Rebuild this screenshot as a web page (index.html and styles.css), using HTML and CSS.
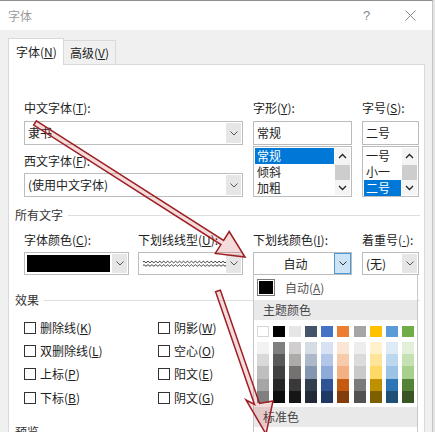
FILE: index.html
```html
<!DOCTYPE html>
<html lang="zh">
<head>
<meta charset="utf-8">
<title>字体</title>
<link rel="stylesheet" href="styles.css">
</head>
<body>
<div class="window">
  <div class="titlebar">
    <span class="title">字体</span>
    <span class="help">?</span>
    <span class="close"><svg width="11" height="11" viewBox="0 0 11 11"><path d="M0.5 0.5 L10.5 10.5 M10.5 0.5 L0.5 10.5" stroke="#8a8a8a" stroke-width="1" fill="none"/></svg></span>
  </div>
  <div class="client">
    <div class="tabs">
      <div class="tab active">字体(<u>N</u>)</div>
      <div class="tab">高级(<u>V</u>)</div>
    </div>
    <div class="panel">
      <div class="upper">
        <div class="col-wide">
          <div class="label">中文字体(<u>T</u>):</div>
          <div class="combo first">
            <span class="combo-text">隶书</span>
            <span class="btn"><svg width="8" height="5" viewBox="0 0 8 5"><path d="M0.5 0.5 L4 4 L7.5 0.5" stroke="#555" fill="none"/></svg></span>
          </div>
          <div class="label second">西文字体(<u>F</u>):</div>
          <div class="combo tight">
            <span class="combo-text">(使用中文字体)</span>
            <span class="btn"><svg width="8" height="5" viewBox="0 0 8 5"><path d="M0.5 0.5 L4 4 L7.5 0.5" stroke="#555" fill="none"/></svg></span>
          </div>
        </div>
        <div class="col-style">
          <div class="label">字形(<u>Y</u>):</div>
          <div class="field first">常规</div>
          <div class="listbox">
            <div class="items">
              <div class="item sel">常规</div>
              <div class="item">倾斜</div>
              <div class="item">加粗</div>
            </div>
            <div class="scroll">
              <svg width="9" height="6" viewBox="0 0 9 6"><path d="M1 5 L4.5 1.5 L8 5" stroke="#222" stroke-width="1.3" fill="none"/></svg>
              <span class="thumb"></span>
              <svg width="9" height="6" viewBox="0 0 9 6"><path d="M1 1 L4.5 4.5 L8 1" stroke="#222" stroke-width="1.3" fill="none"/></svg>
            </div>
          </div>
        </div>
        <div class="col-size">
          <div class="label">字号(<u>S</u>):</div>
          <div class="field first">二号</div>
          <div class="listbox">
            <div class="items">
              <div class="item">一号</div>
              <div class="item">小一</div>
              <div class="item sel">二号</div>
            </div>
            <div class="scroll">
              <svg width="9" height="6" viewBox="0 0 9 6"><path d="M1 5 L4.5 1.5 L8 5" stroke="#222" stroke-width="1.3" fill="none"/></svg>
              <span class="thumb"></span>
              <svg width="9" height="6" viewBox="0 0 9 6"><path d="M1 1 L4.5 4.5 L8 1" stroke="#222" stroke-width="1.3" fill="none"/></svg>
            </div>
          </div>
        </div>
      </div>

      <div class="group-head first-group"><span>所有文字</span><i></i></div>
      <div class="row2">
        <div class="cell c1">
          <div class="label">字体颜色(<u>C</u>):</div>
          <div class="combo">
            <span class="swatch-black"></span>
            <span class="btn"><svg width="8" height="5" viewBox="0 0 8 5"><path d="M0.5 0.5 L4 4 L7.5 0.5" stroke="#555" fill="none"/></svg></span>
          </div>
        </div>
        <div class="cell c2">
          <div class="label">下划线线型(<u>U</u>):</div>
          <div class="combo">
            <span class="wave"><svg width="84" height="8" viewBox="0 0 84 8"><path d="M0 2 q1 -1.6 2 0 t2 0 t2 0 t2 0 t2 0 t2 0 t2 0 t2 0 t2 0 t2 0 t2 0 t2 0 t2 0 t2 0 t2 0 t2 0 t2 0 t2 0 t2 0 t2 0 t2 0 t2 0 t2 0 t2 0 t2 0 t2 0 t2 0 t2 0 t2 0 t2 0 t2 0 t2 0 t2 0 t2 0 t2 0 t2 0 t2 0 t2 0 t2 0 t2 0 t2 0 t2 0 M0 5.5 q1 -1.6 2 0 t2 0 t2 0 t2 0 t2 0 t2 0 t2 0 t2 0 t2 0 t2 0 t2 0 t2 0 t2 0 t2 0 t2 0 t2 0 t2 0 t2 0 t2 0 t2 0 t2 0 t2 0 t2 0 t2 0 t2 0 t2 0 t2 0 t2 0 t2 0 t2 0 t2 0 t2 0 t2 0 t2 0 t2 0 t2 0 t2 0 t2 0 t2 0 t2 0 t2 0 t2 0 t2 0" stroke="#333" stroke-width="1" fill="none"/></svg></span>
            <span class="btn"><svg width="8" height="5" viewBox="0 0 8 5"><path d="M0.5 0.5 L4 4 L7.5 0.5" stroke="#555" fill="none"/></svg></span>
          </div>
        </div>
        <div class="cell c3">
          <div class="label">下划线颜色(<u>I</u>):</div>
          <div class="combo">
            <span class="combo-text center">自动</span>
            <span class="btn hot"><svg width="8" height="5" viewBox="0 0 8 5"><path d="M0.5 0.5 L4 4 L7.5 0.5" stroke="#333" fill="none"/></svg></span>
          </div>
          <div class="popup">
            <div class="auto-row"><span class="auto-box"></span><span class="auto-text">自动(<u>A</u>)</span></div>
            <div class="pop-head">主题颜色</div>
            <div class="theme-row">
              <span class="sw white" style="background:#ffffff"></span>
              <span class="sw" style="background:#000000"></span>
              <span class="sw" style="background:#e7e6e6"></span>
              <span class="sw" style="background:#44546a"></span>
              <span class="sw" style="background:#4472c4"></span>
              <span class="sw" style="background:#ed7d31"></span>
              <span class="sw" style="background:#a5a5a5"></span>
              <span class="sw" style="background:#ffc000"></span>
              <span class="sw" style="background:#5b9bd5"></span>
              <span class="sw" style="background:#70ad47"></span>
            </div>
            <div class="shades">
              <div class="shade-col"><i style="background:#f2f2f2"></i><i style="background:#d9d9d9"></i><i style="background:#bfbfbf"></i><i style="background:#a6a6a6"></i><i style="background:#808080"></i></div>
              <div class="shade-col"><i style="background:#7f7f7f"></i><i style="background:#595959"></i><i style="background:#404040"></i><i style="background:#262626"></i><i style="background:#0d0d0d"></i></div>
              <div class="shade-col"><i style="background:#d0cece"></i><i style="background:#aeaaaa"></i><i style="background:#757171"></i><i style="background:#3a3838"></i><i style="background:#171616"></i></div>
              <div class="shade-col"><i style="background:#d6dce4"></i><i style="background:#adb9ca"></i><i style="background:#8497b0"></i><i style="background:#333f4f"></i><i style="background:#222a35"></i></div>
              <div class="shade-col"><i style="background:#d9e2f3"></i><i style="background:#b4c6e7"></i><i style="background:#8eaadb"></i><i style="background:#2f5496"></i><i style="background:#1f3864"></i></div>
              <div class="shade-col"><i style="background:#fbe5d5"></i><i style="background:#f7caac"></i><i style="background:#f4b083"></i><i style="background:#c55a11"></i><i style="background:#833c0b"></i></div>
              <div class="shade-col"><i style="background:#ededed"></i><i style="background:#dbdbdb"></i><i style="background:#c9c9c9"></i><i style="background:#7b7b7b"></i><i style="background:#525252"></i></div>
              <div class="shade-col"><i style="background:#fff2cc"></i><i style="background:#ffe599"></i><i style="background:#ffd965"></i><i style="background:#bf9000"></i><i style="background:#7f6000"></i></div>
              <div class="shade-col"><i style="background:#deebf6"></i><i style="background:#bdd7ee"></i><i style="background:#9cc3e5"></i><i style="background:#2e75b5"></i><i style="background:#1f4e79"></i></div>
              <div class="shade-col"><i style="background:#e2efd9"></i><i style="background:#c5e0b3"></i><i style="background:#a8d08d"></i><i style="background:#538135"></i><i style="background:#375623"></i></div>
            </div>
            <div class="pop-head std">标准色</div>
          </div>
        </div>
        <div class="cell c4">
          <div class="label">着重号(<span class="dot">·</span>):</div>
          <div class="combo">
            <span class="combo-text">(无)</span>
            <span class="btn"><svg width="8" height="5" viewBox="0 0 8 5"><path d="M0.5 0.5 L4 4 L7.5 0.5" stroke="#555" fill="none"/></svg></span>
          </div>
        </div>
      </div>

      <div class="group-head effects-head"><span>效果</span><i></i></div>
      <div class="checks">
        <label class="check"><span class="box"></span>删除线(<u>K</u>)</label>
        <label class="check"><span class="box"></span>阴影(<u>W</u>)</label>
        <label class="check"><span class="box"></span>双删除线(<u>L</u>)</label>
        <label class="check"><span class="box"></span>空心(<u>O</u>)</label>
        <label class="check"><span class="box"></span>上标(<u>P</u>)</label>
        <label class="check"><span class="box"></span>阳文(<u>E</u>)</label>
        <label class="check"><span class="box"></span>下标(<u>B</u>)</label>
        <label class="check"><span class="box"></span>阴文(<u>G</u>)</label>
      </div>
      <div class="group-head preview-head"><span>预览</span><i></i></div>
    </div>
  </div>
</div>
<svg class="annot" width="435" height="432" viewBox="0 0 435 432">
  <polygon points="36.4,120.9 223.6,240.4 229.2,231.5 245,257 215.3,253.4 220.9,244.6 33.7,125.1" fill="rgba(200,60,60,0.18)" stroke="#9e1f24" stroke-width="1.5" stroke-linejoin="miter"/>
  <polygon points="220.4,290.2 259.5,403.5 273,401 266,434 246,400 254.5,404.5 215.6,291.8" fill="rgba(200,60,60,0.18)" stroke="#9e1f24" stroke-width="1.5" stroke-linejoin="miter"/>
</svg>
</body>
</html>
```

FILE: styles.css
```css
* { box-sizing: border-box; }
html, body { margin: 0; padding: 0; }
body {
  width: 435px;
  height: 432px;
  overflow: hidden;
  position: relative;
  background: #e4e4e4;
  font-family: "Noto Sans CJK SC", "Noto Sans", sans-serif;
  font-size: 12px;
  line-height: 16px;
  color: #222;
}
u { text-decoration: underline; text-underline-offset: 1px; }
.dot { font-family: "Liberation Sans", sans-serif; text-decoration: underline; text-underline-offset: 1px; }

.window {
  width: 433px;
  height: 432px;
  background: #f0f0f0;
  border-top: 1px solid #8f8f8f;
  border-right: 1px solid #c6c6c6;
  display: flex;
  flex-direction: column;
}
.titlebar {
  flex: none;
  height: 29px;
  background: #fff;
  display: flex;
  align-items: center;
  padding-left: 8px;
}
.title { flex: 1; color: #9b9b9b; }
.help { color: #8a8a8a; width: 14px; margin-right: 28px; font-family: "Liberation Sans", sans-serif; font-size: 13px; }
.close { width: 11px; height: 11px; margin-right: 16px; display: flex; }

.client {
  flex: 1;
  display: flex;
  flex-direction: column;
  padding: 8px 0 0 8px;
  min-height: 0;
}
.tabs { display: flex; align-items: flex-end; height: 26px; flex: none; }
.tab {
  height: 24px;
  width: 52px;
  padding-left: 6px;
  display: flex;
  align-items: center;
  background: #f0f0f0;
  border: 1px solid #d9d9d9;
  border-left: none;
  border-bottom: none;
}
.tab.active {
  width: 56px;
  height: 27px;
  padding-left: 7px;
  background: #fff;
  border-left: 1px solid #d9d9d9;
  margin-bottom: -1px;
  position: relative;
  z-index: 1;
}

.panel {
  flex: 1;
  width: 417px;
  background: #fff;
  border: 1px solid #d9d9d9;
  border-bottom: none;
  padding: 35px 0 0 6px;
  position: relative;
}
.label { height: 16px; white-space: nowrap; }

.upper { display: flex; margin-left: 9px; }
.col-wide { width: 219px; display: flex; flex-direction: column; }
.col-style { width: 99px; margin-left: 10px; display: flex; flex-direction: column; }
.col-size { width: 57px; margin-left: 10px; display: flex; flex-direction: column; }
.label.second { margin-top: 8px; }

.combo {
  height: 24px;
  border: 1px solid #bcbcbc;
  background: #fff;
  display: flex;
  align-items: stretch;
  padding: 1px;
}
.combo.first { margin-top: 5px; }
.combo.tight { margin-top: 4px; }
.combo-text { flex: 1; padding-left: 2px; display: flex; align-items: center; white-space: nowrap; }
.combo-text.center { justify-content: center; }
.btn {
  width: 15px;
  background: #e6e6e6;
  display: flex;
  align-items: center;
  justify-content: center;
}
.btn.hot { background: #cde4f7; border: 1px solid #4a9ad8; width: 17px; margin: -1px -1px -1px 0; }

.field {
  height: 24px;
  border: 1px solid #bcbcbc;
  padding-left: 3px;
  display: flex;
  align-items: center;
}
.field.first { margin-top: 5px; }
.listbox {
  margin-top: 1px;
  height: 51px;
  border: 1px solid #bcbcbc;
  display: flex;
  padding: 1px;
}
.items { flex: 1; display: flex; flex-direction: column; padding-right: 1px; }
.item { height: 16.3px; padding-left: 2px; display: flex; align-items: center; }
.item.sel { background: #0078d7; color: #fff; }
.scroll {
  width: 15px;
  display: flex;
  flex-direction: column;
  align-items: center;
  justify-content: space-between;
  padding: 5px 0 4px;
  background: #f4f4f4;
}
.thumb { width: 15px; height: 15px; background: #cdcdcd; }

.group-head { display: flex; align-items: center; height: 16px; color: #333; }
.group-head span { white-space: nowrap; }
.group-head i { flex: 1; height: 1px; background: #dedede; margin: 0 4px 0 5px; }
.first-group { margin-top: 10px; }

.row2 { display: flex; margin-left: 9px; margin-top: 9px; }
.cell { display: flex; flex-direction: column; }
.cell .combo { margin-top: 4px; height: 23px; }
.c1 { width: 105px; }
.c2 { width: 105px; margin-left: 9px; }
.c3 { width: 99px; margin-left: 10px; position: relative; }
.c4 { width: 57px; margin-left: 10px; }
.swatch-black { flex: 1; background: #000; margin: 1px 2px 1px 1px; }
.wave { flex: 1; display: flex; align-items: center; padding-left: 3px; overflow: hidden; }

.popup {
  position: absolute;
  top: 100%;
  left: 0;
  width: 165px;
  height: 170px;
  background: #fff;
  border: 1px solid #c8c8c8;
  border-top: none;
  z-index: 5;
  display: flex;
  flex-direction: column;
}
.auto-row { height: 25px; display: flex; align-items: center; padding-left: 3px; flex: none; }
.auto-box { width: 18px; height: 17px; background: #000; border: 1px solid #7a7a7a; box-shadow: inset 0 0 0 1px #fff; }
.auto-text { margin-left: 10px; color: #555; }
.pop-head { flex: none; height: 20px; background: #e9e9e9; padding-left: 9px; display: flex; align-items: center; color: #444; }
.theme-row { flex: none; display: flex; gap: 4.1px; padding-left: 3px; margin-top: 6px; height: 11px; }
.sw { width: 12px; height: 11px; }
.sw.white { border: 1px solid #d6d6d6; }
.shades { flex: none; display: flex; gap: 4.1px; padding-left: 3px; margin-top: 5px; }
.shade-col { width: 12px; display: flex; flex-direction: column; }
.shade-col i { display: block; height: 12.2px; }
.pop-head.std { margin-top: 4px; }

.effects-head { margin-top: 17px; }
.checks {
  margin-left: 9px;
  margin-top: 8px;
  display: grid;
  grid-template-columns: 134px 120px;
  grid-auto-rows: 23.3px;
}
.check { display: flex; align-items: center; white-space: nowrap; }
.box { width: 12px; height: 12px; border: 1px solid #333; background: #fff; margin-right: 4px; flex: none; }
.preview-head { margin-top: 15px; }

.annot { position: absolute; left: 0; top: 0; pointer-events: none; z-index: 10; }
```
